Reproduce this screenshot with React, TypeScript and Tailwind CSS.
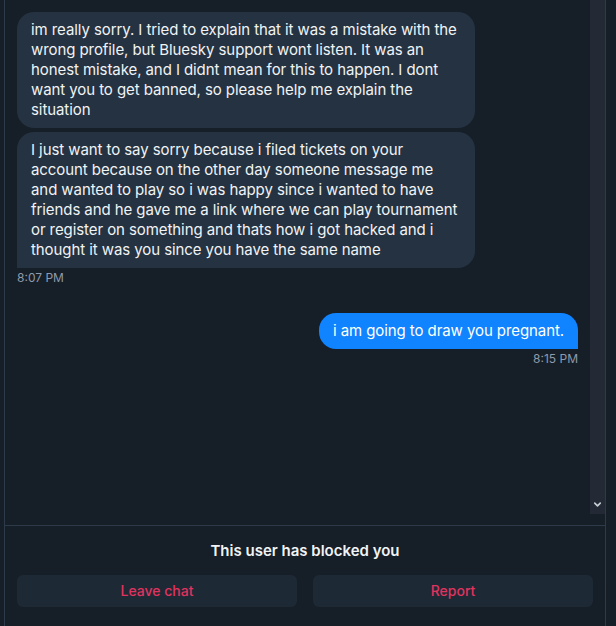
import { ChevronDown } from 'lucide-react';

type Msg = { text: string; mine?: boolean };

function Bubble({ text, mine, tail }: Msg & { tail?: boolean }) {
  return (
    <div
      className={
        mine
          ? `self-end max-w-[458px] rounded-[17px] px-3.5 py-2 bg-[#1083fe] text-white ${tail ? 'rounded-br-none' : ''}`
          : `self-start max-w-[458px] rounded-[17px] px-3.5 py-2 bg-[#243241] text-[#f1f3f5] ${tail ? 'rounded-bl-none' : ''}`
      }
    >
      <p className="text-[15px] leading-5 tracking-[-0.08px]">{text}</p>
    </div>
  );
}

export default function App() {
  return (
    <div className="h-[626px] w-[616px] overflow-hidden bg-[#161e27] font-['Inter',_'Liberation_Sans',_sans-serif]">
      <div className="ml-1 flex h-full w-[602px] flex-col border-x border-[#2c3a4a]">
        {/* Message list */}
        <div className="flex h-[526px] border-b border-[#2c3a4a]">
          <div className="flex flex-1 flex-col px-3 pt-3">
            <div className="flex flex-col gap-1">
              <Bubble text="im really sorry. I tried to explain that it was a mistake with the wrong profile, but Bluesky support wont listen. It was an honest mistake, and I didnt mean for this to happen. I dont want you to get banned, so please help me explain the situation" />
              <Bubble
                tail
                text="I just want to say sorry because i filed tickets on your account because on the other day someone message me and wanted to play so i was happy since i wanted to have friends and he gave me a link where we can play tournament or register on something and thats how i got hacked and i thought it was you since you have the same name"
              />
            </div>
            <span className="mt-[2px] text-xs leading-4 text-[#8d9aab]">8:07 PM</span>

            <div className="mt-[27px] flex flex-col">
              <Bubble mine tail text="i am going to draw you pregnant." />
              <span className="mt-[2px] self-end text-xs leading-4 text-[#8d9aab]">8:15 PM</span>
            </div>
          </div>
          {/* Scrollbar */}
          <div className="flex h-[514px] w-[15px] flex-col justify-end items-center bg-[#232a35] pb-1">
            <ChevronDown size={11} strokeWidth={3.5} className="text-[#c9ced6]" />
          </div>
        </div>

        {/* Blocked footer */}
        <div className="flex flex-col gap-[14px] px-3 pt-[15px]">
          <p className="text-center text-[15px] font-semibold leading-5 text-[#f1f3f5]">
            This user has blocked you
          </p>
          <div className="grid grid-cols-2 gap-4">
            <button className="h-8 rounded-md bg-[#1e2936] text-sm font-medium text-[#e0335f]">
              Leave chat
            </button>
            <button className="h-8 rounded-md bg-[#1e2936] text-sm font-medium text-[#e0335f]">
              Report
            </button>
          </div>
        </div>
      </div>
    </div>
  );
}
